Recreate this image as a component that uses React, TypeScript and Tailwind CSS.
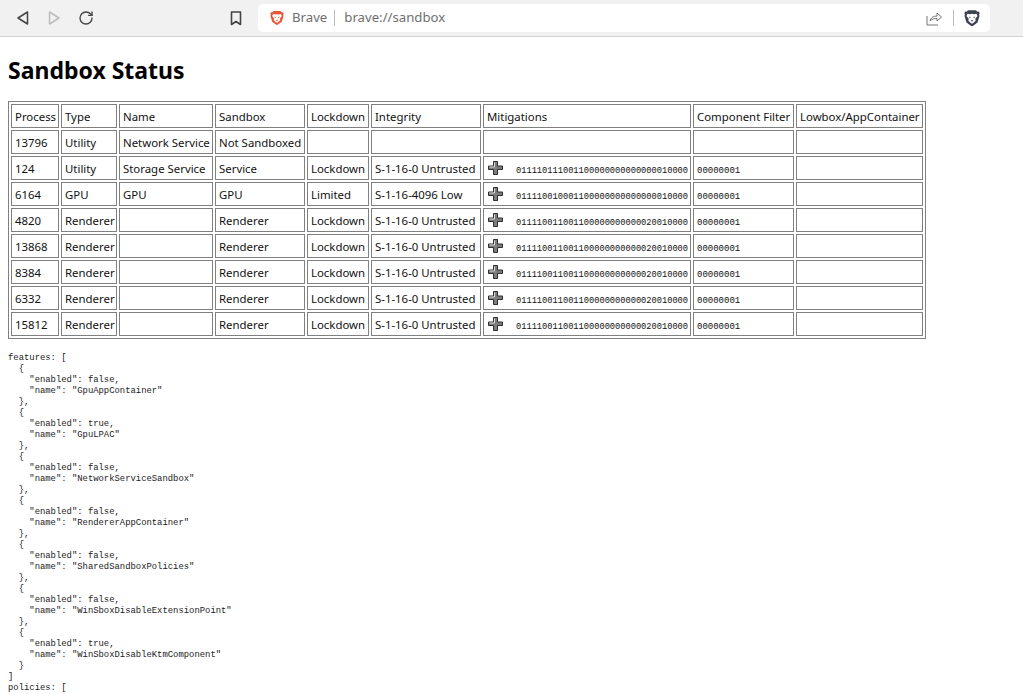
import React from "react";
import { RotateCw } from "lucide-react";

const columns = [
  { label: "Process", width: "w-[48px]" },
  { label: "Type", width: "w-[56px]" },
  { label: "Name", width: "w-[94px]" },
  { label: "Sandbox", width: "w-[90px]" },
  { label: "Lockdown", width: "w-[62px]" },
  { label: "Integrity", width: "w-[110px]" },
  { label: "Mitigations", width: "w-[208px]" },
  { label: "Component Filter", width: "w-[101px]" },
  { label: "Lowbox/AppContainer", width: "w-[127px]" },
];

const rows = [
  ["13796", "Utility", "Network Service", "Not Sandboxed", "", "", "", "", ""],
  ["124", "Utility", "Storage Service", "Service", "Lockdown", "S-1-16-0 Untrusted", "011110111001100000000000000010000", "00000001", ""],
  ["6164", "GPU", "GPU", "GPU", "Limited", "S-1-16-4096 Low", "011110010001100000000000000010000", "00000001", ""],
  ["4820", "Renderer", "", "Renderer", "Lockdown", "S-1-16-0 Untrusted", "011110011001100000000000020010000", "00000001", ""],
  ["13868", "Renderer", "", "Renderer", "Lockdown", "S-1-16-0 Untrusted", "011110011001100000000000020010000", "00000001", ""],
  ["8384", "Renderer", "", "Renderer", "Lockdown", "S-1-16-0 Untrusted", "011110011001100000000000020010000", "00000001", ""],
  ["6332", "Renderer", "", "Renderer", "Lockdown", "S-1-16-0 Untrusted", "011110011001100000000000020010000", "00000001", ""],
  ["15812", "Renderer", "", "Renderer", "Lockdown", "S-1-16-0 Untrusted", "011110011001100000000000020010000", "00000001", ""],
];

const features = [
  ["false", "GpuAppContainer"],
  ["true", "GpuLPAC"],
  ["false", "NetworkServiceSandbox"],
  ["false", "RendererAppContainer"],
  ["false", "SharedSandboxPolicies"],
  ["false", "WinSboxDisableExtensionPoint"],
  ["true", "WinSboxDisableKtmComponent"],
];

const dump =
  "features: [\n" +
  features
    .map(([on, name]) => `  {\n    "enabled": ${on},\n    "name": "${name}"\n  }`)
    .join(",\n") +
  "\n]\npolicies: [";

function PlusIcon() {
  return (
    <svg width="16" height="16" viewBox="0 0 16 16" className="shrink-0">
      <path d="M5.500 1.500h4v4.500h5v3.500h-5v5h-4v-5h-5V6h5z" fill="#7c7c7c" stroke="#2e2e2e" strokeWidth="1" />
      <path d="M6.500 2.500V7h-5" fill="none" stroke="#dcdcdc" strokeWidth="1" />
    </svg>
  );
}

function BraveShield({ color, size }: { color: string; size: number }) {
  return (
    <svg width={size} height={size * 1.150} viewBox="0 0 16 18">
      <path d="M4 1h8l1.300 1.500 1.500-.1.900 1.500-.6 1.400.4 1.400-2 6.500L9.200 16.500 8 17l-1.200-.5-4.300-3.300-2-6.500.4-1.400-.6-1.400.9-1.500 1.500.1z" fill={color} />
      <path d="M3.500 4.500 6 5l2-.4 2 .4 2.500-.5 1 2.300-2.400 3 .7 1.500-2.300 2.300L8 14.500l-1.500-.9-2.300-2.300.7-1.500-2.400-3z" fill="#fff" />
      <path d="M4.800 7.200 6.700 8 6 9.200zM11.200 7.200 9.300 8l.7 1.200zM6.500 11h3L8 12.600z" fill={color} />
    </svg>
  );
}

function Toolbar() {
  return (
    <div className="flex h-[37px] items-center border-b border-[#d0d0d0] bg-[#f1f1f1]">
      <div className="flex w-[258px] items-center pl-[16px]">
        <svg width="14" height="16" viewBox="0 0 14 16" fill="none" stroke="#444" strokeWidth="1.500" strokeLinejoin="round">
          <path d="M11.500 2v12L2 8z" />
        </svg>
        <svg width="14" height="16" viewBox="0 0 14 16" fill="none" stroke="#bdbdbd" strokeWidth="1.500" strokeLinejoin="round" className="ml-[17px]">
          <path d="M2.500 2v12L12 8z" />
        </svg>
        <RotateCw size={16} color="#444" strokeWidth={2} className="ml-[17px]" />
        <svg width="12" height="15" viewBox="0 0 12 15" fill="none" stroke="#444" strokeWidth="1.600" strokeLinejoin="round" className="ml-[136px]">
          <path d="M1.500 1h9v12.500L6 10.500l-4.500 3z" />
        </svg>
      </div>
      <div className="flex h-[28px] w-[732px] items-center rounded-[5px] bg-white pl-[12px] pr-[10px]">
        <BraveShield color="#e8563a" size={14} />
        <span className="ml-[8px] text-[13.200px] text-[#6f6f6f] [font-family:'Noto_Sans',sans-serif]">Brave</span>
        <div className="ml-[7px] mr-[9px] h-[16px] w-px bg-[#bbb]" />
        <span className="text-[13.200px] text-[#6f6f6f] [font-family:'Noto_Sans',sans-serif]">brave://sandbox</span>
        <svg width="16" height="16" viewBox="0 0 16 16" fill="none" stroke="#777" strokeWidth="1" className="ml-auto">
          <path d="M1 6v9h11" />
          <path d="M4 11c.5-3 3-5 7-5V3l4.500 4L11 11V8.500c-3 0-5 .5-7 2.500z" strokeLinejoin="round" />
        </svg>
        <div className="ml-[11px] h-[16px] w-px bg-[#bbb]" />
        <div className="ml-[10px] flex">
          <BraveShield color="#3d4150" size={16} />
        </div>
      </div>
    </div>
  );
}

function Cell({ value, col }: { value: string; col: number }) {
  if (col === 6 && value) {
    return (
      <div className="flex items-center pl-[4px]">
        <PlusIcon />
        <span className="ml-[12px] mt-[8px] text-[8.700px] [font-family:'Liberation_Mono',monospace]">{value}</span>
      </div>
    );
  }
  if (col === 7 && value) {
    return <div className="mt-[8px] pl-[3px] text-[9px] [font-family:'Liberation_Mono',monospace]">{value}</div>;
  }
  return <div className="pl-[3px] pt-[1px]">{value}</div>;
}

export default function App() {
  return (
    <div className="h-[694px] overflow-hidden bg-white text-black">
      <Toolbar />
      <h1 className="ml-[8px] mt-[16px] h-[34px] text-[23px] font-bold leading-[34px] [font-family:'Noto_Sans',sans-serif]">
        Sandbox Status
      </h1>
      <table className="ml-[8px] mt-[14px] w-[918px] table-fixed border-separate border-spacing-[2px] border border-[#808080] text-[11.400px] text-[#111] [font-family:'Noto_Sans',sans-serif]">
        <colgroup>
          {columns.map((c) => (
            <col key={c.label} className={c.width} />
          ))}
        </colgroup>
        <tbody>
          <tr>
            {columns.map((c) => (
              <td key={c.label} className="h-[24px] overflow-hidden whitespace-nowrap border border-[#808080] p-0 pl-[3px] pt-[1px]">
                {c.label}
              </td>
            ))}
          </tr>
          {rows.map((row, i) => (
            <tr key={i}>
              {row.map((value, j) => (
                <td key={j} className="h-[24px] overflow-hidden whitespace-nowrap border border-[#808080] p-0">
                  <Cell value={value} col={j} />
                </td>
              ))}
            </tr>
          ))}
        </tbody>
      </table>
      <pre className="ml-[8px] mt-[14px] text-[8.900px] leading-[11px] text-[#222] [font-family:'Liberation_Mono',monospace]">{dump}</pre>
    </div>
  );
}
